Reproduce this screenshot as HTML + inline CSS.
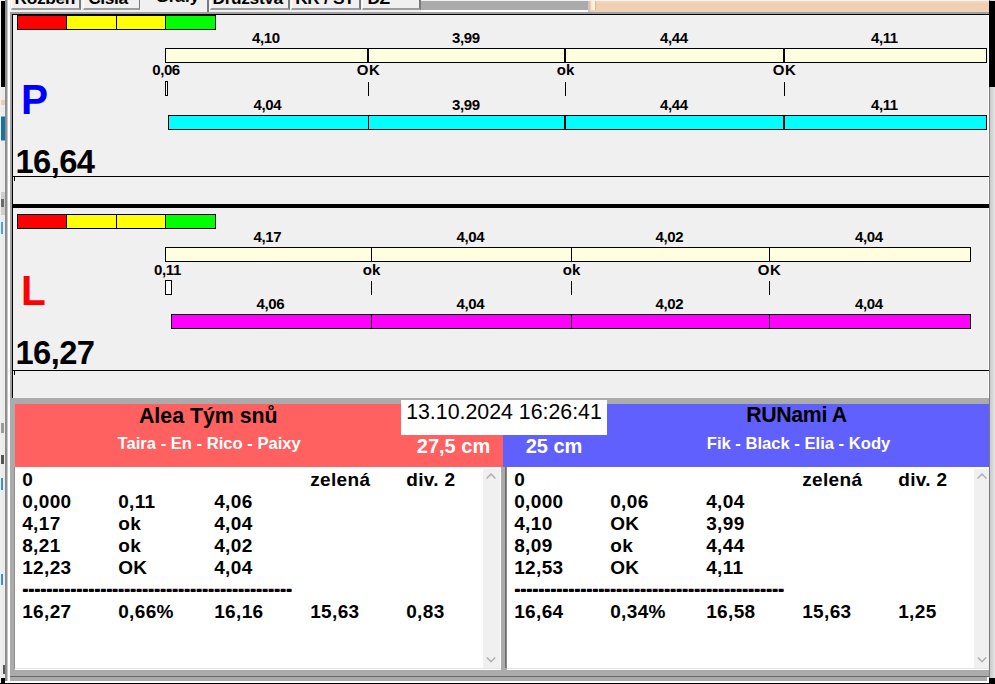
<!DOCTYPE html>
<html><head><meta charset="utf-8"><title>Grafy</title>
<style>
html,body{margin:0;padding:0;}
body{width:995px;height:684px;overflow:hidden;background:#f0f0f0;position:relative;font-family:"Liberation Sans", sans-serif;}
body div, body svg{position:absolute;}
</style></head><body>
<div style="left:0;top:0;width:995px;height:12px;background:#f0f0f0;overflow:hidden">
<div style="left:11px;top:-14px;width:70px;height:24px;background:#f0f0f0;border-left:1px solid #fff;border-right:2px solid #7a7a7a;border-bottom:2px solid #9c9c9c;box-sizing:border-box;"></div>
<div style="left:14.6px;top:-10.37px;font-size:17.33px;line-height:17.33px;font-weight:bold;white-space:pre;letter-spacing:-0.35px;">Rozběh</div>
<div style="left:83px;top:-14px;width:58px;height:24px;background:#f0f0f0;border-left:1px solid #fff;border-right:2px solid #7a7a7a;border-bottom:2px solid #9c9c9c;box-sizing:border-box;"></div>
<div style="left:88.2px;top:-10.37px;font-size:17.33px;line-height:17.33px;font-weight:bold;white-space:pre;letter-spacing:-0.35px;">Čísla</div>
<div style="left:210px;top:-14px;width:80px;height:24px;background:#f0f0f0;border-left:1px solid #fff;border-right:2px solid #7a7a7a;border-bottom:2px solid #9c9c9c;box-sizing:border-box;"></div>
<div style="left:212.5px;top:-10.37px;font-size:17.33px;line-height:17.33px;font-weight:bold;white-space:pre;letter-spacing:-0.35px;">Družstva</div>
<div style="left:291px;top:-14px;width:70px;height:24px;background:#f0f0f0;border-left:1px solid #fff;border-right:2px solid #7a7a7a;border-bottom:2px solid #9c9c9c;box-sizing:border-box;"></div>
<div style="left:295.2px;top:-10.37px;font-size:17.33px;line-height:17.33px;font-weight:bold;white-space:pre;letter-spacing:-0.35px;">KR / ST</div>
<div style="left:362px;top:-14px;width:59px;height:24px;background:#f0f0f0;border-left:1px solid #fff;border-right:2px solid #7a7a7a;border-bottom:2px solid #9c9c9c;box-sizing:border-box;"></div>
<div style="left:367.4px;top:-10.37px;font-size:17.33px;line-height:17.33px;font-weight:bold;white-space:pre;letter-spacing:-0.35px;">DZ</div>
<div style="left:140px;top:-14px;width:69px;height:27px;background:#f0f0f0;border-right:2px solid #7a7a7a;box-sizing:border-box;"></div>
<div style="left:155.6px;top:-12.47px;font-size:17.33px;line-height:17.33px;font-weight:bold;white-space:pre;letter-spacing:-0.35px;">Grafy</div>
<div style="left:421px;top:0;width:168px;height:10px;background:#ababab"></div>
<div style="left:421px;top:10px;width:168px;height:2px;background:#fff"></div>
<div style="left:588px;top:0;width:2px;height:12px;background:#d4c4c0"></div>
<div style="left:590px;top:0;width:399px;height:12px;background:linear-gradient(#f3dcc6,#efcdb0 40%,#f0d2b8)"></div>
<div style="left:591px;top:0;width:4px;height:10px;background:linear-gradient(90deg,#f6e2c8,#fff4dc 70%)"></div>
<div style="left:595px;top:0;width:1px;height:10px;background:#d8b79c"></div>
<div style="left:421px;top:0;width:568px;height:1px;background:#f6f2ee"></div>
</div>
<div style="left:0px;top:0px;width:1px;height:684px;background:#f0f0ec;"></div>
<div style="left:1px;top:0px;width:4px;height:684px;background:#ececec;"></div>
<div style="left:1px;top:1px;width:4px;height:86px;background:#000;"></div>
<div style="left:1px;top:100px;width:4px;height:5px;background:#e8cdb8;"></div>
<div style="left:1px;top:116px;width:4px;height:25px;background:#7ab4dc;"></div>
<div style="left:1px;top:117px;width:4px;height:23px;background:#1a6fa8;"></div>
<div style="left:1px;top:192px;width:4px;height:23px;background:#cfcfcf;"></div>
<div style="left:1px;top:199px;width:3px;height:8px;background:#6a6a6a;"></div>
<div style="left:1px;top:222px;width:2px;height:12px;background:#4aa0e0;"></div>
<div style="left:1px;top:423px;width:3px;height:10px;background:#9a9a9a;"></div>
<div style="left:1px;top:455px;width:3px;height:9px;background:#555;"></div>
<div style="left:1px;top:478px;width:2px;height:12px;background:#3a90d0;"></div>
<div style="left:1px;top:574px;width:2px;height:11px;background:#3a90d0;"></div>
<div style="left:3px;top:665px;width:2px;height:9px;background:#555;"></div>
<div style="left:5px;top:0px;width:1px;height:684px;background:#8c8c8c;"></div>
<div style="left:6px;top:0px;width:1px;height:684px;background:#909090;"></div>
<div style="left:7px;top:0px;width:1px;height:684px;background:#c8c8c8;"></div>
<div style="left:8px;top:0px;width:2px;height:684px;background:#fff;"></div>
<div style="left:988px;top:12px;width:1px;height:386px;background:#fff;"></div>
<div style="left:989px;top:0px;width:1px;height:684px;background:#7a7a7a;"></div>
<div style="left:990px;top:0;width:5px;height:684px;background:linear-gradient(90deg,#cacaca,#e4e4e4)"></div>
<div style="left:989px;top:1px;width:6px;height:86px;background:#000;"></div>
<div style="left:989px;top:678px;width:6px;height:6px;background:#000;"></div>
<div style="left:10px;top:12px;width:979px;height:2px;background:#a0a0a0;"></div>
<div style="left:10px;top:12px;width:2px;height:386px;background:#a0a0a0;"></div>
<div style="left:12px;top:14px;width:977px;height:1px;background:#000;"></div>
<div style="left:12px;top:14px;width:1px;height:384px;background:#000;"></div>
<div style="left:17px;top:15px;width:50px;height:15px;background:#ff0000;border:1px solid #000;box-sizing:border-box;"></div>
<div style="left:66px;top:15px;width:51px;height:15px;background:#ffff00;border:1px solid #000;box-sizing:border-box;"></div>
<div style="left:116px;top:15px;width:50px;height:15px;background:#ffff00;border:1px solid #000;box-sizing:border-box;"></div>
<div style="left:165px;top:15px;width:51px;height:15px;background:#00ff00;border:1px solid #000;box-sizing:border-box;"></div>
<div style="left:165px;top:48px;width:204px;height:15px;background:#ffffe0;border:1px solid #000;box-sizing:border-box;"></div>
<div style="left:368px;top:48px;width:198px;height:15px;background:#ffffe0;border:1px solid #000;box-sizing:border-box;"></div>
<div style="left:565px;top:48px;width:220px;height:15px;background:#ffffe0;border:1px solid #000;box-sizing:border-box;"></div>
<div style="left:784px;top:48px;width:203px;height:15px;background:#ffffe0;border:1px solid #000;box-sizing:border-box;"></div>
<div style="left:367px;top:48px;width:2px;height:15px;background:#000;"></div>
<div style="left:564px;top:48px;width:2px;height:15px;background:#000;"></div>
<div style="left:783px;top:48px;width:2px;height:15px;background:#000;"></div>
<div style="left:168px;top:115px;width:201px;height:15px;background:#00ffff;border:1px solid #000;box-sizing:border-box;"></div>
<div style="left:368px;top:115px;width:198px;height:15px;background:#00ffff;border:1px solid #000;box-sizing:border-box;"></div>
<div style="left:565px;top:115px;width:220px;height:15px;background:#00ffff;border:1px solid #000;box-sizing:border-box;"></div>
<div style="left:784px;top:115px;width:203px;height:15px;background:#00ffff;border:1px solid #000;box-sizing:border-box;"></div>
<div style="left:564px;top:115px;width:2px;height:15px;background:#000;"></div>
<div style="left:783px;top:115px;width:2px;height:15px;background:#000;"></div>
<div style="top:29.50px;font-size:15px;line-height:15px;color:#000;white-space:pre;font-weight:bold;letter-spacing:-0.4px;left:-34.10000000000002px;width:600px;text-align:center;">4,10</div>
<div style="top:29.50px;font-size:15px;line-height:15px;color:#000;white-space:pre;font-weight:bold;letter-spacing:-0.4px;left:165.89999999999998px;width:600px;text-align:center;">3,99</div>
<div style="top:29.50px;font-size:15px;line-height:15px;color:#000;white-space:pre;font-weight:bold;letter-spacing:-0.4px;left:373.9px;width:600px;text-align:center;">4,44</div>
<div style="top:29.50px;font-size:15px;line-height:15px;color:#000;white-space:pre;font-weight:bold;letter-spacing:-0.4px;left:584.4px;width:600px;text-align:center;">4,11</div>
<div style="top:96.50px;font-size:15px;line-height:15px;color:#000;white-space:pre;font-weight:bold;letter-spacing:-0.4px;left:-32.60000000000002px;width:600px;text-align:center;">4,04</div>
<div style="top:96.50px;font-size:15px;line-height:15px;color:#000;white-space:pre;font-weight:bold;letter-spacing:-0.4px;left:165.89999999999998px;width:600px;text-align:center;">3,99</div>
<div style="top:96.50px;font-size:15px;line-height:15px;color:#000;white-space:pre;font-weight:bold;letter-spacing:-0.4px;left:373.9px;width:600px;text-align:center;">4,44</div>
<div style="top:96.50px;font-size:15px;line-height:15px;color:#000;white-space:pre;font-weight:bold;letter-spacing:-0.4px;left:584.4px;width:600px;text-align:center;">4,11</div>
<div style="top:62.40px;font-size:15px;line-height:15px;color:#000;white-space:pre;font-weight:bold;letter-spacing:0.4px;left:68.5px;width:600px;text-align:center;">OK</div>
<div style="left:368px;top:82px;width:1px;height:14px;background:#000;"></div>
<div style="top:62.40px;font-size:15px;line-height:15px;color:#000;white-space:pre;font-weight:bold;left:265.5px;width:600px;text-align:center;">ok</div>
<div style="left:565px;top:82px;width:1px;height:14px;background:#000;"></div>
<div style="top:62.40px;font-size:15px;line-height:15px;color:#000;white-space:pre;font-weight:bold;letter-spacing:0.4px;left:484.5px;width:600px;text-align:center;">OK</div>
<div style="left:784px;top:82px;width:1px;height:14px;background:#000;"></div>
<div style="top:62.40px;font-size:15px;line-height:15px;color:#000;white-space:pre;font-weight:bold;letter-spacing:-0.4px;left:-134px;width:600px;text-align:center;">0,06</div>
<div style="left:165px;top:81px;width:3px;height:15px;background:#fff;border:1px solid #000;box-sizing:border-box;"></div>
<div style="top:77.88px;font-size:42.67px;line-height:42.67px;color:#0000ff;white-space:pre;font-weight:bold;left:20.8px;transform:scaleX(0.95);transform-origin:0 0;">P</div>
<div style="top:146.32px;font-size:32.7px;line-height:32.7px;color:#000;white-space:pre;font-weight:bold;letter-spacing:-0.55px;left:15.4px;">16,64</div>
<div style="left:13px;top:176px;width:976px;height:1px;background:#000;"></div>
<div style="left:14px;top:177px;width:1px;height:4px;background:#000;"></div>
<div style="left:13px;top:204px;width:976px;height:4px;background:#000;"></div>
<div style="left:17px;top:214px;width:50px;height:15px;background:#ff0000;border:1px solid #000;box-sizing:border-box;"></div>
<div style="left:66px;top:214px;width:51px;height:15px;background:#ffff00;border:1px solid #000;box-sizing:border-box;"></div>
<div style="left:116px;top:214px;width:50px;height:15px;background:#ffff00;border:1px solid #000;box-sizing:border-box;"></div>
<div style="left:165px;top:214px;width:51px;height:15px;background:#00ff00;border:1px solid #000;box-sizing:border-box;"></div>
<div style="left:165px;top:247px;width:207px;height:15px;background:#ffffe0;border:1px solid #000;box-sizing:border-box;"></div>
<div style="left:371px;top:247px;width:201px;height:15px;background:#ffffe0;border:1px solid #000;box-sizing:border-box;"></div>
<div style="left:571px;top:247px;width:199px;height:15px;background:#ffffe0;border:1px solid #000;box-sizing:border-box;"></div>
<div style="left:769px;top:247px;width:202px;height:15px;background:#ffffe0;border:1px solid #000;box-sizing:border-box;"></div>
<div style="left:171px;top:314px;width:201px;height:15px;background:#ff00ff;border:1px solid #000;box-sizing:border-box;"></div>
<div style="left:371px;top:314px;width:201px;height:15px;background:#ff00ff;border:1px solid #000;box-sizing:border-box;"></div>
<div style="left:571px;top:314px;width:199px;height:15px;background:#ff00ff;border:1px solid #000;box-sizing:border-box;"></div>
<div style="left:769px;top:314px;width:202px;height:15px;background:#ff00ff;border:1px solid #000;box-sizing:border-box;"></div>
<div style="top:228.50px;font-size:15px;line-height:15px;color:#000;white-space:pre;font-weight:bold;letter-spacing:-0.4px;left:-32.60000000000002px;width:600px;text-align:center;">4,17</div>
<div style="top:228.50px;font-size:15px;line-height:15px;color:#000;white-space:pre;font-weight:bold;letter-spacing:-0.4px;left:170.39999999999998px;width:600px;text-align:center;">4,04</div>
<div style="top:228.50px;font-size:15px;line-height:15px;color:#000;white-space:pre;font-weight:bold;letter-spacing:-0.4px;left:369.4px;width:600px;text-align:center;">4,02</div>
<div style="top:228.50px;font-size:15px;line-height:15px;color:#000;white-space:pre;font-weight:bold;letter-spacing:-0.4px;left:568.9px;width:600px;text-align:center;">4,04</div>
<div style="top:295.50px;font-size:15px;line-height:15px;color:#000;white-space:pre;font-weight:bold;letter-spacing:-0.4px;left:-29.600000000000023px;width:600px;text-align:center;">4,06</div>
<div style="top:295.50px;font-size:15px;line-height:15px;color:#000;white-space:pre;font-weight:bold;letter-spacing:-0.4px;left:170.39999999999998px;width:600px;text-align:center;">4,04</div>
<div style="top:295.50px;font-size:15px;line-height:15px;color:#000;white-space:pre;font-weight:bold;letter-spacing:-0.4px;left:369.4px;width:600px;text-align:center;">4,02</div>
<div style="top:295.50px;font-size:15px;line-height:15px;color:#000;white-space:pre;font-weight:bold;letter-spacing:-0.4px;left:568.9px;width:600px;text-align:center;">4,04</div>
<div style="top:262.20px;font-size:15px;line-height:15px;color:#000;white-space:pre;font-weight:bold;left:71.5px;width:600px;text-align:center;">ok</div>
<div style="left:371px;top:281px;width:1px;height:14px;background:#000;"></div>
<div style="top:262.20px;font-size:15px;line-height:15px;color:#000;white-space:pre;font-weight:bold;left:271.5px;width:600px;text-align:center;">ok</div>
<div style="left:571px;top:281px;width:1px;height:14px;background:#000;"></div>
<div style="top:262.20px;font-size:15px;line-height:15px;color:#000;white-space:pre;font-weight:bold;letter-spacing:0.4px;left:469.5px;width:600px;text-align:center;">OK</div>
<div style="left:769px;top:281px;width:1px;height:14px;background:#000;"></div>
<div style="top:262.20px;font-size:15px;line-height:15px;color:#000;white-space:pre;font-weight:bold;letter-spacing:-0.4px;left:-132.5px;width:600px;text-align:center;">0,11</div>
<div style="left:165px;top:280px;width:7px;height:15px;background:#fff;border:1px solid #000;box-sizing:border-box;"></div>
<div style="top:268.68px;font-size:42.67px;line-height:42.67px;color:#ff0000;white-space:pre;font-weight:bold;left:21.2px;transform:scaleX(0.95);transform-origin:0 0;">L</div>
<div style="top:337.32px;font-size:32.7px;line-height:32.7px;color:#000;white-space:pre;font-weight:bold;letter-spacing:-0.55px;left:15.4px;">16,27</div>
<div style="left:13px;top:370px;width:976px;height:1px;background:#000;"></div>
<div style="left:14px;top:371px;width:1px;height:4px;background:#000;"></div>
<div style="left:10px;top:398px;width:979px;height:283px;background:#ababab;"></div>
<div style="left:10px;top:676px;width:979px;height:1px;background:#696969;"></div>
<div style="left:0px;top:681px;width:995px;height:2px;background:#fff;"></div>
<div style="left:0px;top:683px;width:995px;height:1px;background:#000;"></div>
<div style="left:987px;top:677px;width:2px;height:4px;background:#fff;"></div>
<div style="left:1px;top:678px;width:4px;height:6px;background:#000;"></div>
<div style="left:989px;top:678px;width:6px;height:6px;background:#000;"></div>
<div style="left:15px;top:404px;width:488px;height:63px;background:#ff6060;"></div>
<div style="left:503px;top:404px;width:486px;height:63px;background:#6060ff;"></div>
<div style="left:401px;top:400px;width:206px;height:35px;background:#fff;"></div>
<div style="top:401.94px;font-size:21.33px;line-height:21.33px;color:#000;white-space:pre;left:204px;width:600px;text-align:center;">13.10.2024 16:26:41</div>
<div style="top:405.54px;font-size:21.33px;line-height:21.33px;color:#000;white-space:pre;font-weight:bold;left:-91.69999999999999px;width:600px;text-align:center;">Alea Tým snů</div>
<div style="top:436.45px;font-size:16.6px;line-height:16.6px;color:#fff;white-space:pre;font-weight:bold;left:-90.80000000000001px;width:600px;text-align:center;">Taira - En - Rico - Paixy</div>
<div style="top:405.44px;font-size:21.33px;line-height:21.33px;color:#000;white-space:pre;font-weight:bold;letter-spacing:-0.4px;left:496.5px;width:600px;text-align:center;">RUNami A</div>
<div style="top:436.35px;font-size:16.6px;line-height:16.6px;color:#fff;white-space:pre;font-weight:bold;left:498.5px;width:600px;text-align:center;">Fik - Black - Elia - Kody</div>
<div style="top:436.27px;font-size:20px;line-height:20px;color:#fff;white-space:pre;font-weight:bold;left:153.5px;width:600px;text-align:center;">27,5 cm</div>
<div style="top:436.27px;font-size:20px;line-height:20px;color:#fff;white-space:pre;font-weight:bold;left:254px;width:600px;text-align:center;">25 cm</div>
<div style="left:15px;top:467px;width:486px;height:203px;background:#fff;"></div>
<div style="left:15px;top:668px;width:486px;height:1px;background:#e3e3e3;"></div>
<div style="left:483px;top:469px;width:17px;height:199px;background:#f0f0f0;"></div>
<svg style="left:483px;top:469px" width="17" height="199" viewBox="0 0 17 199"><path d="M3.6 9.4 L8 5 L12.4 9.4" fill="none" stroke="#adadad" stroke-width="1.4"/><path d="M3.9 188.6 L8 192.7 L12.1 188.6" fill="none" stroke="#adadad" stroke-width="1.4"/></svg>
<div style="top:469.92px;font-size:19px;line-height:19px;color:#000;white-space:pre;font-weight:bold;letter-spacing:0.35px;left:22.2px;">0</div>
<div style="top:469.92px;font-size:19px;line-height:19px;color:#000;white-space:pre;font-weight:bold;letter-spacing:0.35px;left:310.2px;">zelená</div>
<div style="top:469.92px;font-size:19px;line-height:19px;color:#000;white-space:pre;font-weight:bold;letter-spacing:0.35px;left:406.2px;">div. 2</div>
<div style="top:491.92px;font-size:19px;line-height:19px;color:#000;white-space:pre;font-weight:bold;letter-spacing:0.35px;left:22.2px;">0,000</div>
<div style="top:491.92px;font-size:19px;line-height:19px;color:#000;white-space:pre;font-weight:bold;letter-spacing:0.35px;left:118.2px;">0,11</div>
<div style="top:491.92px;font-size:19px;line-height:19px;color:#000;white-space:pre;font-weight:bold;letter-spacing:0.35px;left:214.2px;">4,06</div>
<div style="top:513.92px;font-size:19px;line-height:19px;color:#000;white-space:pre;font-weight:bold;letter-spacing:0.35px;left:22.2px;">4,17</div>
<div style="top:513.92px;font-size:19px;line-height:19px;color:#000;white-space:pre;font-weight:bold;letter-spacing:0.35px;left:118.2px;">ok</div>
<div style="top:513.92px;font-size:19px;line-height:19px;color:#000;white-space:pre;font-weight:bold;letter-spacing:0.35px;left:214.2px;">4,04</div>
<div style="top:535.92px;font-size:19px;line-height:19px;color:#000;white-space:pre;font-weight:bold;letter-spacing:0.35px;left:22.2px;">8,21</div>
<div style="top:535.92px;font-size:19px;line-height:19px;color:#000;white-space:pre;font-weight:bold;letter-spacing:0.35px;left:118.2px;">ok</div>
<div style="top:535.92px;font-size:19px;line-height:19px;color:#000;white-space:pre;font-weight:bold;letter-spacing:0.35px;left:214.2px;">4,02</div>
<div style="top:557.92px;font-size:19px;line-height:19px;color:#000;white-space:pre;font-weight:bold;letter-spacing:0.35px;left:22.2px;">12,23</div>
<div style="top:557.92px;font-size:19px;line-height:19px;color:#000;white-space:pre;font-weight:bold;letter-spacing:0.35px;left:118.2px;">OK</div>
<div style="top:557.92px;font-size:19px;line-height:19px;color:#000;white-space:pre;font-weight:bold;letter-spacing:0.35px;left:214.2px;">4,04</div>
<div style="top:580.40px;font-size:18.67px;line-height:18.67px;color:#000;white-space:pre;font-weight:bold;letter-spacing:-0.217px;left:22.2px;text-shadow:0 0.7px 0 #000;">---------------------------------------------</div>
<div style="top:601.92px;font-size:19px;line-height:19px;color:#000;white-space:pre;font-weight:bold;letter-spacing:0.35px;left:22.2px;">16,27</div>
<div style="top:601.92px;font-size:19px;line-height:19px;color:#000;white-space:pre;font-weight:bold;letter-spacing:0.35px;left:118.2px;">0,66%</div>
<div style="top:601.92px;font-size:19px;line-height:19px;color:#000;white-space:pre;font-weight:bold;letter-spacing:0.35px;left:214.2px;">16,16</div>
<div style="top:601.92px;font-size:19px;line-height:19px;color:#000;white-space:pre;font-weight:bold;letter-spacing:0.35px;left:310.2px;">15,63</div>
<div style="top:601.92px;font-size:19px;line-height:19px;color:#000;white-space:pre;font-weight:bold;letter-spacing:0.35px;left:406.2px;">0,83</div>
<div style="left:507px;top:467px;width:482px;height:203px;background:#fff;"></div>
<div style="left:507px;top:668px;width:482px;height:1px;background:#e3e3e3;"></div>
<div style="left:974px;top:469px;width:15px;height:199px;background:#f0f0f0;"></div>
<svg style="left:974px;top:469px" width="17" height="199" viewBox="0 0 17 199"><path d="M3.6 9.4 L8 5 L12.4 9.4" fill="none" stroke="#adadad" stroke-width="1.4"/><path d="M3.9 188.6 L8 192.7 L12.1 188.6" fill="none" stroke="#adadad" stroke-width="1.4"/></svg>
<div style="top:469.92px;font-size:19px;line-height:19px;color:#000;white-space:pre;font-weight:bold;letter-spacing:0.35px;left:514.2px;">0</div>
<div style="top:469.92px;font-size:19px;line-height:19px;color:#000;white-space:pre;font-weight:bold;letter-spacing:0.35px;left:802.2px;">zelená</div>
<div style="top:469.92px;font-size:19px;line-height:19px;color:#000;white-space:pre;font-weight:bold;letter-spacing:0.35px;left:898.2px;">div. 2</div>
<div style="top:491.92px;font-size:19px;line-height:19px;color:#000;white-space:pre;font-weight:bold;letter-spacing:0.35px;left:514.2px;">0,000</div>
<div style="top:491.92px;font-size:19px;line-height:19px;color:#000;white-space:pre;font-weight:bold;letter-spacing:0.35px;left:610.2px;">0,06</div>
<div style="top:491.92px;font-size:19px;line-height:19px;color:#000;white-space:pre;font-weight:bold;letter-spacing:0.35px;left:706.2px;">4,04</div>
<div style="top:513.92px;font-size:19px;line-height:19px;color:#000;white-space:pre;font-weight:bold;letter-spacing:0.35px;left:514.2px;">4,10</div>
<div style="top:513.92px;font-size:19px;line-height:19px;color:#000;white-space:pre;font-weight:bold;letter-spacing:0.35px;left:610.2px;">OK</div>
<div style="top:513.92px;font-size:19px;line-height:19px;color:#000;white-space:pre;font-weight:bold;letter-spacing:0.35px;left:706.2px;">3,99</div>
<div style="top:535.92px;font-size:19px;line-height:19px;color:#000;white-space:pre;font-weight:bold;letter-spacing:0.35px;left:514.2px;">8,09</div>
<div style="top:535.92px;font-size:19px;line-height:19px;color:#000;white-space:pre;font-weight:bold;letter-spacing:0.35px;left:610.2px;">ok</div>
<div style="top:535.92px;font-size:19px;line-height:19px;color:#000;white-space:pre;font-weight:bold;letter-spacing:0.35px;left:706.2px;">4,44</div>
<div style="top:557.92px;font-size:19px;line-height:19px;color:#000;white-space:pre;font-weight:bold;letter-spacing:0.35px;left:514.2px;">12,53</div>
<div style="top:557.92px;font-size:19px;line-height:19px;color:#000;white-space:pre;font-weight:bold;letter-spacing:0.35px;left:610.2px;">OK</div>
<div style="top:557.92px;font-size:19px;line-height:19px;color:#000;white-space:pre;font-weight:bold;letter-spacing:0.35px;left:706.2px;">4,11</div>
<div style="top:580.40px;font-size:18.67px;line-height:18.67px;color:#000;white-space:pre;font-weight:bold;letter-spacing:-0.217px;left:514.2px;text-shadow:0 0.7px 0 #000;">---------------------------------------------</div>
<div style="top:601.92px;font-size:19px;line-height:19px;color:#000;white-space:pre;font-weight:bold;letter-spacing:0.35px;left:514.2px;">16,64</div>
<div style="top:601.92px;font-size:19px;line-height:19px;color:#000;white-space:pre;font-weight:bold;letter-spacing:0.35px;left:610.2px;">0,34%</div>
<div style="top:601.92px;font-size:19px;line-height:19px;color:#000;white-space:pre;font-weight:bold;letter-spacing:0.35px;left:706.2px;">16,58</div>
<div style="top:601.92px;font-size:19px;line-height:19px;color:#000;white-space:pre;font-weight:bold;letter-spacing:0.35px;left:802.2px;">15,63</div>
<div style="top:601.92px;font-size:19px;line-height:19px;color:#000;white-space:pre;font-weight:bold;letter-spacing:0.35px;left:898.2px;">1,25</div>
<div style="left:14px;top:467px;width:1px;height:201px;background:#8e8e8e;"></div>
<div style="left:505px;top:467px;width:2px;height:201px;background:#6c6c6c;"></div>
<div style="left:506px;top:467px;width:1px;height:201px;background:#8a8a8a;"></div>
</body></html>
